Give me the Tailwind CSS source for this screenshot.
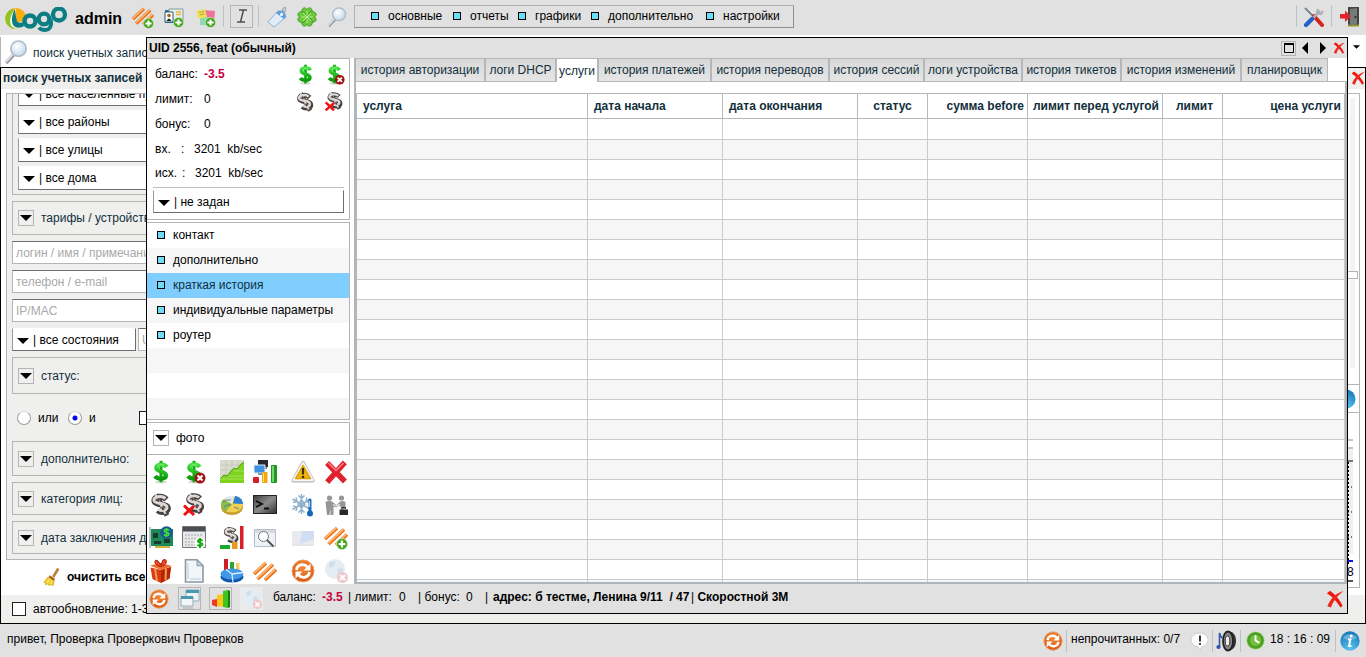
<!DOCTYPE html>
<html lang="ru">
<head>
<meta charset="utf-8">
<title>Logo admin</title>
<script src="https://cdn.jsdelivr.net/npm/@tailwindcss/browser@4"></script>
</head>
<body class="flex h-screen flex-col overflow-hidden bg-[#e1e1e1] font-['Liberation_Sans',Arial,sans-serif] text-[12px] leading-4 text-black">

<svg class="absolute size-0" aria-hidden="true">
  <defs>
    <linearGradient id="gGreen" x1="0" y1="0" x2="0" y2="1"><stop offset="0" stop-color="#3fe03a"/><stop offset="1" stop-color="#0c9a0c"/></linearGradient>
    <linearGradient id="gDark" x1="0" y1="0" x2="1" y2="1"><stop offset="0" stop-color="#3a3a3a"/><stop offset=".5" stop-color="#8b8b8b"/><stop offset="1" stop-color="#2c2c2c"/></linearGradient>
    <radialGradient id="gBlue" cx=".5" cy=".9" r=".9"><stop offset="0" stop-color="#5cc4f2"/><stop offset="1" stop-color="#1577b8"/></radialGradient>
    <radialGradient id="gOrange" cx=".5" cy=".3" r=".8"><stop offset="0" stop-color="#f58a3a"/><stop offset="1" stop-color="#d4520a"/></radialGradient>
    <radialGradient id="gLens" cx=".4" cy=".35" r=".7"><stop offset="0" stop-color="#fff"/><stop offset="1" stop-color="#bcd6ec"/></radialGradient>
  </defs>
  <symbol id="plus" viewBox="0 0 12 12"><circle cx="6" cy="6" r="5.5" fill="#42a51a" stroke="#dff2d2" stroke-width=".6"/><path d="M6 2.6v6.8M2.6 6h6.8" stroke="#fff" stroke-width="2.2"/></symbol>
  <symbol id="bad" viewBox="0 0 12 12"><circle cx="6" cy="6" r="5.5" fill="#9c1414"/><path d="M3.5 3.5l5 5M8.500 3.500l-5 5" stroke="#fff" stroke-width="2"/></symbol>
  <symbol id="dollar" viewBox="0 0 24 24"><ellipse cx="12" cy="22" rx="6" ry="1.500" fill="#000" opacity=".15"/><path d="M12 .8v21.500" stroke="#14a514" stroke-width="3"/><path d="M17.500 7C16 3.800 7.500 3.500 7.300 7.800c-.2 4.200 9.800 3 9.700 7.600-.1 4-8.600 4.200-11 .6" fill="none" stroke="url(#gGreen)" stroke-width="4.200"/><path d="M8 6.500c1.500-2 5-2.200 7-1.200" fill="none" stroke="#8ef08a" stroke-width="1"/></symbol>
  <symbol id="dollarbad" viewBox="0 0 24 24"><use href="#dollar" width="24" height="24"/><use href="#bad" x="12" y="12" width="12" height="12"/></symbol>
  <symbol id="sgrey" viewBox="0 0 24 24"><path d="M7 1.500l11 21" stroke="#4a4442" stroke-width="5"/><path d="M17.500 6.500C13 2 4 3.500 5.500 8.500c1.500 4.300 12 1.500 13.300 6 1.200 4.500-6 6.200-10.100 3" fill="none" stroke="#46413f" stroke-width="5.800"/><path d="M6.500 1.500l10 19.500" stroke="#cfc9c7" stroke-width="2.400"/><path d="M16.500 5.500C12.500 2 4.300 3.800 5 7.500c1 4.300 11.500 1.500 12.800 6 1 4.200-5.500 5.200-8.600 2.500" fill="none" stroke="#ded9d7" stroke-width="3"/><path d="M8.500 5.500l1.500 3M13 14l1.500 3" stroke="#4a4442" stroke-width="2"/></symbol>
  <symbol id="sgreyx" viewBox="0 0 24 24"><use href="#sgrey" x="2" y="-1" width="22" height="23"/><path d="M2 12.500l10 9.500M12 13L2 22" stroke="#f01010" stroke-width="3"/></symbol>
  <symbol id="chart" viewBox="0 0 24 24"><path d="M0 0h24v23H0z" fill="#d9dccf"/><path d="M0 5h24M0 10h24M0 15h24M6 0v23M12 0v23M18 0v23" stroke="#bfc5b4" stroke-width=".7"/><path d="M0 19l4-4 3 1 4-5 3-3 3 1 4-5 3-2v21H0z" fill="#7fd31f"/><path d="M0 19l4-4 3 1 4-5 3-3 3 1 4-5 3-2" fill="none" stroke="#4fa30c"/><path d="M0 19h24M8 16h16M14 11h10" stroke="#b6ec74" stroke-width=".7"/></symbol>
  <symbol id="traffic" viewBox="0 0 24 24"><path d="M5 0h10v7H5z" fill="#28292e"/><path d="M9 7h5v2H9z" fill="#70757c"/><path d="M1 5h11v8H1z" fill="#3c93e4" stroke="#e2ecf6"/><path d="M5 13h4v2H5z" fill="#8b929c"/><rect x="0" y="17" width="6" height="6" rx="1" fill="#d2212c"/><rect x="9" y="12" width="5.500" height="11" rx="1" fill="#f0a818"/><path d="M10.500 13v9" stroke="#ffe07a"/><rect x="18" y="5" width="6" height="18" rx="1" fill="#209627"/><path d="M20 6v16" stroke="#8cec7e" stroke-width="1.500"/></symbol>
  <symbol id="warn" viewBox="0 0 24 24"><path d="M12 3L21.500 20.500h-19z" fill="#b4b4b4" stroke="#b4b4b4" stroke-width="4" stroke-linejoin="round"/><path d="M12 3L21.500 20h-19z" fill="#fff" stroke="#f5f5f5" stroke-width="2.500" stroke-linejoin="round"/><path d="M12 5.500l7.500 13h-15z" fill="#f0b414" stroke="#e0a000" stroke-width="1.500" stroke-linejoin="round"/><path d="M12 8v6.500" stroke="#3c2c00" stroke-width="2.200"/><circle cx="12" cy="17" r="1.300" fill="#3c2c00"/></symbol>
  <symbol id="redx" viewBox="0 0 24 24"><path d="M5 5l14 14.500M19 4.500L5 20" stroke="#e0222e" stroke-width="5.500" stroke-linecap="square"/><path d="M4.500 3l7.500 7.500L19.500 3" fill="none" stroke="#ff8088" stroke-width="1.500"/></symbol>
  <symbol id="pie" viewBox="0 0 24 24"><ellipse cx="12" cy="14" rx="11" ry="8" fill="#c49a2a"/><ellipse cx="12" cy="11.500" rx="11" ry="8" fill="#f2cf50"/><path d="M12 11L3 6.500C-1 11 2 17 6 18.300z" fill="#8cbc4c"/><path d="M12 11L4 5.500C8 2.500 13 3 14 3.500z" fill="#dfe9ef"/><path d="M13 10.500l2-7.500c5 .5 8 4 8 8z" fill="#2f7fd0"/><path d="M3 9q3-3 8-2M4 14q3-3 7-2M14 14l5 2" stroke="#3a6ea0" fill="none" stroke-width=".8"/></symbol>
  <symbol id="term" viewBox="0 0 24 24"><path d="M0 2h24v19H0z" fill="url(#gDark)"/><path d="M.5 2.500h23v18H.5z" fill="none" stroke="#222"/><path d="M3 8l6 3-6 3M11 15.500h5" fill="none" stroke="#0a0a0a" stroke-width="1.800"/></symbol>
  <symbol id="snow" viewBox="0 0 24 24"><g stroke="#8fb0cb" stroke-width="1.500" fill="none"><path d="M10.500 1v20M1.500 6l18 10.500M19.500 6l-18 10.500M7.500 2.500l3 3 3-3M7.500 19.500l3-3 3 3M2 9.500l4-1-1-4M19 9.500l-4-1 1-4M2 13l4 1-1 4M7 11l3.500-4 3.500 4-3.500 4z"/></g><path d="M19 7v12" stroke="#1f6fc0" stroke-width="3" stroke-linecap="round"/><circle cx="19" cy="20.500" r="3" fill="#1767b8"/><path d="M18.600 8v6" stroke="#bfe0fa"/></symbol>
  <symbol id="shake" viewBox="0 0 24 24"><g fill="#969696"><circle cx="5.500" cy="5" r="2.600"/><circle cx="17.500" cy="5" r="2.600"/><path d="M1.500 9q4-3 7 0l4 3 3-3q3-2 6 0v7h-2v6h-2.500v-7l-1.500-3-3 2.500-3-1v8.500H6.500v-6l-1 6H3z"/></g><path d="M9 11.500l3.500 1.500 3-2" stroke="#e4e4e4" fill="none" stroke-width="1.300"/><path d="M15.500 16.500H24V22h-8.500z" fill="#2a2a2a"/><path d="M18 16v-1.500h3.500V16" stroke="#2a2a2a" fill="none"/></symbol>
  <symbol id="board" viewBox="0 0 24 24"><path d="M2 3h22v17H2z" fill="#1d8a5a"/><path d="M1 1v21" stroke="#a7adb0" stroke-width="1.500"/><path d="M4 7h5v5H4zM5 15h7v3H5zM15 13h6v4h-6z" fill="#173c2d"/><path d="M6 21h15" stroke="#d4b33c" stroke-width="2"/><circle cx="17.500" cy="6.500" r="6.300" fill="#1a5a94"/><path d="M20 4.500c-1-1.800-5-1.500-4.800.5.300 2 5 1 4.800 3.200-.2 1.800-4 2-5 .3M17.500 2v9" fill="none" stroke="#3fe03a" stroke-width="1.600"/></symbol>
  <symbol id="caldollar" viewBox="0 0 24 24"><path d="M.5.500h23v21H.5z" fill="#e8e8ea" stroke="#777"/><path d="M1 1h22v4.500H1z" fill="#4a4d52"/><path d="M3 9h18M3 12.500h12M3 16h10M3 19h10" stroke="#b9bcc0" stroke-width="1.500" stroke-dasharray="2 1"/><circle cx="18" cy="17" r="5.500" fill="#fff"/><path d="M20.500 15c-1-2-5-1.500-4.600.5.200 1.800 4.800 1 4.600 3-.2 1.600-4 1.800-5 .2M18 12v10" fill="none" stroke="#18a818" stroke-width="2"/></symbol>
  <symbol id="sbars" viewBox="0 0 24 24"><use href="#sgrey" x="2" y="0" width="18" height="19"/><rect x="0" y="19" width="10" height="4" fill="#18a830"/><rect x="12" y="16" width="5.500" height="7" fill="#e89a20"/><rect x="20" y="0" width="3.500" height="23" fill="#d81f2a"/></symbol>
  <symbol id="find" viewBox="0 0 24 24"><path d="M1.500 3.500h21v17h-21z" fill="#eef1f5" stroke="#b9bec6"/><path d="M2 4h20v3H2z" fill="#d5dbe3"/><circle cx="10.500" cy="10.500" r="5" fill="#fff" stroke="#777"/><path d="M14 14l6.500 6.500" stroke="#555" stroke-width="2"/></symbol>
  <symbol id="faded" viewBox="0 0 24 24"><path d="M1 5h22v14H1z" fill="#e8eaf0"/><path d="M11 5h12v8L9 18z" fill="#d0def3"/><path d="M1 18h22v2H1z" fill="#e4e6ea"/></symbol>
  <symbol id="stripes" viewBox="0 0 24 24"><path d="M1 15L13 4M4.500 20L20 5.500M12 21l11-10.500" stroke="#ec7014" stroke-width="3.600"/><path d="M1 14.200L12.500 3.700M4.500 19.200L19.500 5.200M12 20l10.500-10" stroke="#fdbb7c" stroke-width="1.600"/></symbol>
  <symbol id="stripesplus" viewBox="0 0 24 24"><use href="#stripes" y="-2" width="24" height="24"/><use href="#plus" x="12" y="12" width="12" height="12"/></symbol>
  <symbol id="gift" viewBox="0 0 24 24"><path d="M1.500 8.500L12 11l10-3-1.500 11.500L12 24l-8.500-4z" fill="#d83a14"/><path d="M12 11l10-3-1.500 11.500L12 24z" fill="#b42608"/><path d="M6 9.500L8 22M17 9.500L16.500 21" stroke="#f79c4c" stroke-width="2"/><path d="M1 6.500L12 4l11 3-11 4z" fill="#ee6c2c"/><path d="M12 7.500C4 6 5 0 8.500 1.500L12 6l2-5c4-2 6 4-2 6.500z" fill="#f04a28" stroke="#9c1c04"/></symbol>
  <symbol id="page" viewBox="0 0 24 24"><path d="M3.500.800h11.500l6 6V23H3.500z" fill="#f3f6f9" stroke="#8a98a8" stroke-width="1.600"/><path d="M15 .8v6h6z" fill="#c3ced9" stroke="#8a98a8"/><path d="M6 4v16M8 20h11" stroke="#d8e0e9" stroke-width="2"/></symbol>
  <symbol id="pie3d" viewBox="0 0 24 24"><path d="M4 0h4v12H4z" fill="#cc1f26"/><path d="M10 3h4v9h-4z" fill="#2fa238"/><path d="M16 4h3.500v8H16z" fill="#efcf62"/><ellipse cx="12" cy="18" rx="11.500" ry="5.500" fill="#0d55a8"/><ellipse cx="12" cy="15" rx="11.500" ry="5.500" fill="#3f97e6"/><path d="M12 15l-6-4.600M12 15l11-1.500M12 15l1 8.500" stroke="#d8edff" stroke-width="1.300"/></symbol>
  <symbol id="refresh" viewBox="0 0 24 24"><circle cx="12" cy="12" r="11" fill="url(#gOrange)" stroke="#e9a36c"/><path d="M5.500 11C6 5.500 13 4 16.500 8M18.500 13C18 18.500 11 20 7.500 16" fill="none" stroke="#fff" stroke-width="2.800"/><path d="M19.500 4.500v7h-7zM4.500 19.500v-7h7z" fill="#fff"/></symbol>
  <symbol id="globex" viewBox="0 0 24 24"><circle cx="11" cy="10" r="10" fill="#e4edf3"/><path d="M5 4q4-3 7-1l-3 5-4 1zM13 10l6-1v5l-5 4z" fill="#d3dfe8"/><circle cx="18.500" cy="18.500" r="5.500" fill="#efc8cb"/><path d="M16 16l5 5M21 16l-5 5" stroke="#fff" stroke-width="1.800"/></symbol>
  <symbol id="lens" viewBox="0 0 24 24"><path d="M10 14.500L2 23" stroke="#8f949b" stroke-width="3.400"/><path d="M9.500 14L1.500 22.500" stroke="#e6e9ed" stroke-width="1.500"/><circle cx="14.500" cy="8.700" r="7.700" fill="url(#gLens)" stroke="#b4bbc4" stroke-width="1.600"/></symbol>
  <symbol id="thinx" viewBox="0 0 20 20"><path d="M1 3.500c5 3 11 9 15 16l2.500-2C15 10 9 4 4.500.8z" fill="#ee180c"/><path d="M19.500 1C11 3 4.500 10 1.500 18l4 1.500C7.500 13 12 7 19.500 1z" fill="#f0281c"/></symbol>
  <symbol id="down" viewBox="0 0 12 6"><path d="M0 0h12L6 6z" fill="#000"/></symbol>
  <symbol id="broom" viewBox="0 0 20 22"><path d="M18 1l-6 10" stroke="#b8803c" stroke-width="3"/><path d="M8 9l6 4-1 3-7-4z" fill="#a8642c"/><path d="M6 11l7 5-1 5-3-1-2 1-1-2-3 1v-2l-2-1z" fill="#f4d02c" stroke="#c89c10" stroke-width=".8"/><path d="M8 13l-3 5M10.500 15l-1 4" stroke="#fff1a0"/></symbol>
</svg>

<!-- Toolbar -->
<header class="flex h-[35px] shrink-0 items-center pr-[6px] pb-[3px] pl-1">
  <svg class="mt-2 h-[26px] w-16 shrink-0" viewBox="0 0 64 26" role="img" aria-label="Logo">
    <circle cx="12" cy="11.500" r="10.500" fill="#faae0c"/><path d="M9 1.500A10.500 10.500 0 0 0 10 22z" fill="#8fc31f"/>
    <path d="M12 1.500c-5 4-7 12-5 17 3 4 10 4 14 0l-1-5c-3 2-6 2-8 0-1-4-1-8 0-12z" fill="#fff"/>
    <path d="M11 2c-3 5-4 11-2 16 3 4 9 3 11 1l-1-4c-2 1-5 1-6-1-1-4-2-8-2-12z" fill="#0c7d83"/>
    <circle cx="26" cy="14" r="5.500" fill="none" stroke="#0c7d83" stroke-width="4.500"/>
    <circle cx="40" cy="12" r="5.300" fill="none" stroke="#0c7d83" stroke-width="4.300"/>
    <path d="M46.500 12c2 7-1 11-5.500 11-3 0-5-1-6-2.500" fill="none" stroke="#0c7d83" stroke-width="3.800"/>
    <circle cx="55" cy="7.500" r="6" fill="none" stroke="#0c7d83" stroke-width="4.300"/>
  </svg>
  <h1 class="mt-[6px] ml-[7px] w-[50px] text-[16px] font-bold">admin</h1>
  <button aria-label="Новый тариф" class="ml-[7px]"><svg class="mt-[3px] size-[22px]"><use href="#stripesplus"/></svg></button>
  <button aria-label="Новая карта" class="ml-[10px]"><svg class="mt-[3px] size-5" viewBox="0 0 20 20"><path d="M1 2h14v13H1z" fill="#3a6f94"/><path d="M5 1h14v12H5z" fill="#e8efe8" stroke="#7f9d9f"/><path d="M1 4h8v10H1z" fill="#fff" stroke="#245a80"/><circle cx="5" cy="7.500" r="1.800" fill="#a8641c"/><path d="M2.500 13q2.500-5 5 0z" fill="#222"/><path d="M12 4h5M12 6.500h5" stroke="#efb33c" stroke-width="1.500"/><use href="#plus" x="9" y="9" width="11" height="11"/></svg></button>
  <button aria-label="Новая заметка" class="ml-3"><svg class="mt-[3px] size-5" viewBox="0 0 20 20"><path d="M7 2l12 1-1 11H7z" fill="#f2729c"/><path d="M4 9h10v8H4z" fill="#8fd8b0"/><path d="M0 3l9-2 2 8-9 2z" fill="#f0e060"/><path d="M3 4.500l5-1M3.500 7l5-1" stroke="#b8a830"/><use href="#plus" x="9" y="9" width="11" height="11"/></svg></button>
  <span class="ml-[7px] h-[22px] w-px bg-[#b9c2c4]"></span>
  <button aria-label="Курсор" class="ml-[6px] flex size-[23px] items-center justify-center border border-[#b5b5b5]"><svg class="size-4" viewBox="0 0 16 16"><path d="M5 2h8M9.500 2L6.500 14M3 14h8" stroke="#505050" stroke-width="1.500"/></svg></button>
  <span class="ml-[5px] h-[22px] w-px bg-[#b9c2c4]"></span>
  <button aria-label="Метка" class="ml-[7px]"><svg class="mt-[2px] size-[22px]" viewBox="0 0 22 22"><path d="M12 5l6 0 2 6L8 21l-6-5z" fill="#e3edf8" stroke="#8db2dc"/><path d="M12 5l6 0 2 6-2 2-8-6z" fill="#5f9ce0"/><path d="M15.500 8c0-4 3-8 4-6s-1 4-2 6" stroke="#a0a8b0" fill="none" stroke-width="1.300"/><circle cx="15.500" cy="8.500" r="1.500" fill="#fff"/></svg></button>
  <button aria-label="Клевер" class="ml-[9px]"><svg class="mt-[2px] size-5" viewBox="0 0 20 20"><g fill="#6cc83c" stroke="#3c9a1c"><path d="M10 10C4 9 4 5 5.500 2 7 0 9 1 10 2.500 11 1 13 0 14.500 2 16 5 16 9 10 10z"/><path d="M10 10C4 9 4 5 5.500 2 7 0 9 1 10 2.500 11 1 13 0 14.500 2 16 5 16 9 10 10z" transform="rotate(90 10 10)"/><path d="M10 10C4 9 4 5 5.500 2 7 0 9 1 10 2.500 11 1 13 0 14.500 2 16 5 16 9 10 10z" transform="rotate(180 10 10)"/><path d="M10 10C4 9 4 5 5.500 2 7 0 9 1 10 2.500 11 1 13 0 14.500 2 16 5 16 9 10 10z" transform="rotate(270 10 10)"/></g><path d="M10 4v12M4 10h12M6 6l8 8M14 6l-8 8" stroke="#b8ec8c" stroke-width="1"/></svg></button>
  <button aria-label="Поиск" class="ml-[10px]"><svg class="mt-[2px] size-5"><use href="#lens"/></svg></button>
  <nav class="ml-[7px] flex h-[23px] w-[440px] items-center border border-r-[#8e8e8e] border-b-[#8e8e8e] border-[#b2b2b2] pb-px pl-4">
    <a href="#" class="flex w-[82px] items-center gap-[9px]"><i class="size-2 shrink-0 border border-black bg-[#6fdcf5]"></i>основные</a>
    <a href="#" class="flex w-[65px] items-center gap-[9px]"><i class="size-2 shrink-0 border border-black bg-[#6fdcf5]"></i>отчеты</a>
    <a href="#" class="flex w-[73px] items-center gap-[9px]"><i class="size-2 shrink-0 border border-black bg-[#6fdcf5]"></i>графики</a>
    <a href="#" class="flex w-[115px] items-center gap-[9px]"><i class="size-2 shrink-0 border border-black bg-[#6fdcf5]"></i>дополнительно</a>
    <a href="#" class="flex items-center gap-[9px]"><i class="size-2 shrink-0 border border-black bg-[#6fdcf5]"></i>настройки</a>
  </nav>
  <span class="ml-auto h-[22px] w-px bg-[#b9c2c4]"></span>
  <button aria-label="Инструменты" class="ml-[7px]"><svg class="mt-[2px] size-5" viewBox="0 0 20 20"><path d="M1 1l9 9" stroke="#7a8088" stroke-width="1.800"/><path d="M10 9l8 9" stroke="#d42420" stroke-width="4" stroke-linecap="round"/><path d="M16 4L8 12" stroke="#a8aeb6" stroke-width="2.600"/><path d="M14 2l-1 4 4 1 2-3" fill="none" stroke="#a8aeb6" stroke-width="2"/><path d="M8 12l-6 6" stroke="#2060c8" stroke-width="4.200" stroke-linecap="round"/></svg></button>
  <span class="ml-[7px] h-[22px] w-px bg-[#b9c2c4]"></span>
  <button aria-label="Выход" class="ml-[8px]"><svg class="mt-[2px] size-5" viewBox="0 0 20 20"><path d="M8 0h11v19H8z" fill="#444"/><path d="M8 18.500h11" stroke="#9a9a20" stroke-width="2"/><path d="M10 2l7-1v16l-7 2z" fill="#777b78"/><circle cx="15.500" cy="10" r="1" fill="#222"/><path d="M0 7h5V3.500L11 9.500 5 15v-3.500H0z" fill="#e0242c"/></svg></button>
</header>

<!-- Desktop with overlapping windows -->
<main class="relative flex min-h-0 flex-1 flex-col border-t-2 border-white">
  <div class="flex h-[30px] shrink-0 items-start border-l border-[#b5b5b5] bg-white pl-[3px]">
    <svg class="mt-[3px] size-6"><use href="#lens"/></svg>
    <span class="mt-2 ml-[5px] text-[#12303c]">поиск учетных записей</span>
    <svg class="mt-2 mr-[6px] ml-auto h-1 w-[7px]"><use href="#down"/></svg>
  </div>

  <!-- Search window -->
  <section class="flex min-h-0 flex-1 flex-col border border-black bg-[#efefed]">
    <div class="flex h-[21px] shrink-0 items-center justify-between bg-[#efefed] pb-px pl-[2px] font-bold text-[#12303c]">
      <h2>поиск учетных записей</h2>
      <button aria-label="Закрыть поиск"><svg class="size-[14px]"><use href="#thinx"/></svg></button>
    </div>
    <div class="flex min-h-0 flex-1 justify-between bg-white pt-1">
      <form class="flex w-[330px] flex-col pl-[5px]">
        <div class="flex min-h-0 flex-1 flex-col justify-end gap-[6px] overflow-hidden border border-[#b5b5b5] bg-[#efefed] px-[5px] pb-[5px]">
          <div class="flex shrink-0 flex-col gap-1 border border-[#b5b5b5] px-[5px] pt-[5px] pb-1">
            <div class="relative"><select aria-label="Населённые пункты" class="h-6 w-full appearance-none border border-t-white border-r-[#6e6e6e] border-b-[#6e6e6e] border-l-[#9a9a9a] bg-white pl-5 outline-none"><option>| все населенные пункты</option></select><svg class="absolute top-[10px] left-[5px] h-[6px] w-[12px]"><use href="#down"/></svg></div>
            <div class="relative"><select aria-label="Районы" class="h-6 w-full appearance-none border border-t-white border-r-[#6e6e6e] border-b-[#6e6e6e] border-l-[#9a9a9a] bg-white pl-5 outline-none"><option>| все районы</option></select><svg class="absolute top-[10px] left-[5px] h-[6px] w-[12px]"><use href="#down"/></svg></div>
            <div class="relative"><select aria-label="Улицы" class="h-6 w-full appearance-none border border-t-white border-r-[#6e6e6e] border-b-[#6e6e6e] border-l-[#9a9a9a] bg-white pl-5 outline-none"><option>| все улицы</option></select><svg class="absolute top-[10px] left-[5px] h-[6px] w-[12px]"><use href="#down"/></svg></div>
            <div class="relative"><select aria-label="Дома" class="h-6 w-full appearance-none border border-t-white border-r-[#6e6e6e] border-b-[#6e6e6e] border-l-[#9a9a9a] bg-white pl-5 outline-none"><option>| все дома</option></select><svg class="absolute top-[10px] left-[5px] h-[6px] w-[12px]"><use href="#down"/></svg></div>
          </div>
          <button type="button" class="flex h-[34px] shrink-0 items-center gap-[7px] border border-[#b5b5b5] pl-[5px] text-[#12303c]"><span class="flex size-4 items-center justify-center border border-[#b5b5b5]"><svg class="h-[6px] w-[12px]"><use href="#down"/></svg></span>тарифы / устройства</button>
          <input aria-label="Логин, имя, примечание" placeholder="логин / имя / примечание" class="h-[23px] shrink-0 border border-t-[#6e6e6e] border-[#b5b5b5] bg-white px-[3px] outline-none placeholder:text-[#a9a9a9]">
          <input aria-label="Телефон, e-mail" placeholder="телефон / e-mail" class="h-[23px] shrink-0 border border-t-[#6e6e6e] border-[#b5b5b5] bg-white px-[3px] outline-none placeholder:text-[#a9a9a9]">
          <input aria-label="IP/MAC" placeholder="IP/MAC" class="h-[23px] shrink-0 border border-t-[#6e6e6e] border-[#b5b5b5] bg-white px-[3px] outline-none placeholder:text-[#a9a9a9]">
          <div class="flex shrink-0 gap-[2px]">
            <div class="relative w-[124px]"><select aria-label="Состояния" class="h-[23px] w-full appearance-none border border-t-white border-r-[#6e6e6e] border-b-[#6e6e6e] border-l-[#9a9a9a] bg-white pl-5 outline-none"><option>| все состояния</option></select><svg class="absolute top-[10px] left-[5px] h-[6px] w-[12px]"><use href="#down"/></svg></div>
            <input aria-label="UID" placeholder="UID" class="h-[23px] w-20 border border-t-[#6e6e6e] border-[#b5b5b5] bg-white px-[3px] outline-none placeholder:text-[#a9a9a9]">
          </div>
          <button type="button" class="flex h-[37px] shrink-0 items-center gap-[7px] border border-[#b5b5b5] pl-[5px] text-[#12303c]"><span class="flex size-4 items-center justify-center border border-[#b5b5b5]"><svg class="h-[6px] w-[12px]"><use href="#down"/></svg></span>статус:</button>
          <div class="flex h-[35px] shrink-0 items-center pl-[5px]">
            <label class="flex w-[51px] items-center gap-[7px]"><input type="radio" name="mode" class="size-[14px] appearance-none rounded-full border border-[#9a9a9a] border-t-[#d5d5d5] bg-white">или</label>
            <label class="flex w-[71px] items-center gap-[7px]"><input type="radio" name="mode" checked class="size-[14px] appearance-none rounded-full border border-[#9a9a9a] border-t-[#d5d5d5] bg-white bg-[radial-gradient(circle,#0000ee_2px,transparent_3px)]">и</label>
            <input type="checkbox" aria-label="Только активные" class="size-[14px] appearance-none border border-[#222] bg-white">
          </div>
          <button type="button" class="flex h-[35px] shrink-0 items-center gap-[7px] border border-[#b5b5b5] pl-[5px] text-[#12303c]"><span class="flex size-4 items-center justify-center border border-[#b5b5b5]"><svg class="h-[6px] w-[12px]"><use href="#down"/></svg></span>дополнительно:</button>
          <button type="button" class="flex h-[33px] shrink-0 items-center gap-[7px] border border-[#b5b5b5] pl-[5px] text-[#12303c]"><span class="flex size-4 items-center justify-center border border-[#b5b5b5]"><svg class="h-[6px] w-[12px]"><use href="#down"/></svg></span>категория лиц:</button>
          <button type="button" class="flex h-[33px] shrink-0 items-center gap-[7px] border border-[#b5b5b5] pl-[5px] text-[#12303c]"><span class="flex size-4 items-center justify-center border border-[#b5b5b5]"><svg class="h-[6px] w-[12px]"><use href="#down"/></svg></span>дата заключения договора:</button>
        </div>
        <button type="button" class="flex h-[35px] shrink-0 items-center gap-[7px] pb-[2px] pl-[37px] font-bold"><svg class="h-[22px] w-[17px]"><use href="#broom"/></svg>очистить все</button>
      </form>
      <div class="flex w-24 flex-col pr-[5px] pb-[7px]">
        <div class="flex flex-1 flex-col border border-[#b5b5b5]">
          <div class="relative flex flex-1 flex-col items-end pt-1 pr-px">
            <div class="mr-[3px] w-[5px] flex-1 bg-[#f3f3f3]"></div>
            <span class="absolute top-[177px] right-px h-2 w-5 border border-[#b5b5b5] bg-white"></span>
          </div>
          <div class="mt-4 flex h-[29px] items-center justify-end border-y border-[#b5b5b5] pr-[3px]"><svg class="size-5" viewBox="0 0 20 20"><circle cx="10" cy="10" r="9.500" fill="url(#gBlue)"/></svg></div>
          <svg class="h-[174px] w-5 self-end" viewBox="0 0 20 174"><path d="M0 27h14M0 35h14" stroke="#c4c4c4" stroke-width="2"/><path d="M0 36h14v105H0z" fill="#efefef"/><path d="M0 48h14" stroke="#000"/><path d="M9.500 49v102" stroke="#000" stroke-dasharray="2 2"/><path d="M9 74h5M9 99h5M9 124h5" stroke="#000" stroke-dasharray="1 2"/><path d="M0 148h14" stroke="#1010e0" stroke-width="2"/><path d="M0 168h14" stroke="#555" stroke-width="2"/><text x="8" y="163" font-size="12">8</text></svg>
        </div>
      </div>
    </div>
    <div class="flex h-7 shrink-0 items-center pl-[11px]">
      <label class="flex items-center gap-[7px]"><input type="checkbox" class="size-[14px] appearance-none border border-[#222] bg-white">автообновление: 1-30</label>
    </div>
  </section>

  <!-- Account window -->
  <section class="absolute top-0 right-[18px] bottom-[10px] left-[146px] flex flex-col border border-black bg-[#e1e1e1]">
    <div class="flex h-5 shrink-0 items-center justify-between pr-[2px] pl-[2px]">
      <h2 class="font-bold">UID 2556, feat (обычный)</h2>
      <div class="flex items-center">
        <button aria-label="Развернуть" class="flex size-[15px] items-center justify-center border border-[#b5b5b5]"><svg class="h-[10px] w-[10px]" viewBox="0 0 10 10"><path d="M.5.500h9v9h-9z" fill="none" stroke="#000"/><path d="M0 1h10" stroke="#000" stroke-width="2"/></svg></button>
        <button aria-label="Назад" class="ml-[6px]"><svg class="h-3 w-[6px]" viewBox="0 0 6 12"><path d="M6 0v12L0 6z"/></svg></button>
        <button aria-label="Вперед" class="ml-3"><svg class="h-3 w-[6px]" viewBox="0 0 6 12"><path d="M0 0v12l6-6z"/></svg></button>
        <button aria-label="Закрыть окно" class="ml-[7px]"><svg class="size-3"><use href="#thinx"/></svg></button>
      </div>
    </div>

    <div class="flex min-h-0 flex-1">
      <aside class="flex w-[207px] shrink-0 flex-col overflow-hidden bg-white pr-1">
        <div class="flex h-[162px] shrink-0 flex-col border-y border-r border-[#b5b5b5] pr-[5px] pl-[6px]">
          <div class="flex justify-between pt-[2px] pl-[2px]">
            <dl class="grid auto-rows-[25px] grid-cols-[49px_auto] items-center">
              <dt>баланс:</dt><dd class="font-bold text-[#c8003c]">-3.5</dd>
              <dt>лимит:</dt><dd>0</dd>
              <dt>бонус:</dt><dd>0</dd>
            </dl>
            <div class="grid h-[54px] grid-cols-[29px_20px] grid-rows-2 items-center">
              <button aria-label="Пополнить"><svg class="size-[21px]"><use href="#dollar"/></svg></button>
              <button aria-label="Отменить платеж"><svg class="size-[21px]"><use href="#dollarbad"/></svg></button>
              <button aria-label="Кредит"><svg class="size-5"><use href="#sgrey"/></svg></button>
              <button aria-label="Отменить кредит"><svg class="size-5"><use href="#sgreyx"/></svg></button>
            </div>
          </div>
          <p class="flex h-[25px] items-center pl-[2px] whitespace-pre"><span class="w-[26px]">вх.</span><span class="w-[13px]">:</span>3201  kb/sec</p>
          <p class="flex h-6 items-center pl-[2px] whitespace-pre"><span class="w-[27px]">исх.</span><span class="w-[13px]">:</span>3201  kb/sec</p>
          <div class="relative mt-[2px] border-t border-[#b9c2c4] pt-[2px]"><select aria-label="Группа" class="h-[23px] w-full appearance-none border border-t-white border-r-[#6e6e6e] border-b-[#6e6e6e] border-l-[#9a9a9a] bg-white pl-5 outline-none"><option>| не задан</option></select><svg class="absolute top-3 left-[5px] h-[6px] w-[12px]"><use href="#down"/></svg></div>
        </div>
        <ul class="mt-[2px] flex h-[198px] shrink-0 flex-col overflow-hidden border-y border-r border-[#b5b5b5]">
          <li class="h-[25px] shrink-0"><a href="#" class="flex h-full items-center gap-2 pb-px pl-[10px]"><i class="size-2 border border-black bg-[#6fdcf5]"></i>контакт</a></li>
          <li class="h-[25px] shrink-0 bg-[#f6f6f6]"><a href="#" class="flex h-full items-center gap-2 pb-px pl-[10px]"><i class="size-2 border border-black bg-[#6fdcf5]"></i>дополнительно</a></li>
          <li class="h-[25px] shrink-0 bg-[#7fceff]"><a href="#" class="flex h-full items-center gap-2 pb-px pl-[10px] text-[#12303c]"><i class="size-2 border border-black bg-[#6fdcf5]"></i>краткая история</a></li>
          <li class="h-[25px] shrink-0 bg-[#f6f6f6]"><a href="#" class="flex h-full items-center gap-2 pb-px pl-[10px]"><i class="size-2 border border-black bg-[#6fdcf5]"></i>индивидуальные параметры</a></li>
          <li class="h-[25px] shrink-0"><a href="#" class="flex h-full items-center gap-2 pb-px pl-[10px]"><i class="size-2 border border-black bg-[#6fdcf5]"></i>роутер</a></li>
          <li class="h-[25px] shrink-0 bg-[#f6f6f6]"></li>
          <li class="h-[25px] shrink-0"></li>
          <li class="h-[25px] shrink-0 bg-[#f6f6f6]"></li>
        </ul>
        <button class="mt-[2px] flex h-[33px] shrink-0 items-center gap-[7px] border-y border-r border-[#b5b5b5] pb-px pl-[6px]"><span class="flex size-4 items-center justify-center border border-[#b5b5b5]"><svg class="h-[6px] w-[12px]"><use href="#down"/></svg></span>фото</button>
        <div class="grid min-h-0 flex-1 auto-rows-[33px] grid-cols-[33px_38px_33px_38px_33px_24px] items-center pl-[2px]">
          <button aria-label="Платеж"><svg class="size-6"><use href="#dollar"/></svg></button>
          <button aria-label="Отмена платежа"><svg class="size-6"><use href="#dollarbad"/></svg></button>
          <button aria-label="График"><svg class="size-6"><use href="#chart"/></svg></button>
          <button aria-label="Трафик"><svg class="size-6"><use href="#traffic"/></svg></button>
          <button aria-label="Предупреждение"><svg class="size-6"><use href="#warn"/></svg></button>
          <button aria-label="Удалить"><svg class="size-6"><use href="#redx"/></svg></button>
          <button aria-label="Кредит"><svg class="size-6"><use href="#sgrey"/></svg></button>
          <button aria-label="Отмена кредита"><svg class="size-6"><use href="#sgreyx"/></svg></button>
          <button aria-label="Статистика"><svg class="size-6"><use href="#pie"/></svg></button>
          <button aria-label="Терминал"><svg class="size-6"><use href="#term"/></svg></button>
          <button aria-label="Заморозка"><svg class="size-6"><use href="#snow"/></svg></button>
          <button aria-label="Договор"><svg class="size-6"><use href="#shake"/></svg></button>
          <button aria-label="Устройство"><svg class="size-6"><use href="#board"/></svg></button>
          <button aria-label="Календарь платежей"><svg class="size-6"><use href="#caldollar"/></svg></button>
          <button aria-label="Списания"><svg class="size-6"><use href="#sbars"/></svg></button>
          <button aria-label="Просмотр"><svg class="size-6"><use href="#find"/></svg></button>
          <button aria-label="Карта"><svg class="size-6"><use href="#faded"/></svg></button>
          <button aria-label="Добавить услугу"><svg class="size-6"><use href="#stripesplus"/></svg></button>
          <button aria-label="Подарок"><svg class="size-6"><use href="#gift"/></svg></button>
          <button aria-label="Документ"><svg class="size-6"><use href="#page"/></svg></button>
          <button aria-label="Отчет"><svg class="size-6"><use href="#pie3d"/></svg></button>
          <button aria-label="Услуги"><svg class="size-6"><use href="#stripes"/></svg></button>
          <button aria-label="Обновить"><svg class="size-6"><use href="#refresh"/></svg></button>
          <button aria-label="Отключить"><svg class="size-6"><use href="#globex"/></svg></button>
        </div>
      </aside>

      <div class="flex min-w-0 flex-1 flex-col bg-white">
        <div role="tablist" class="flex h-[24px] shrink-0 border-l-2 border-[#b0b6ba] text-[#12303c]">
          <button role="tab" class="w-[130px] border-t border-r-2 border-b border-[#b5b8ba] bg-linear-to-b from-[#d8d8d8] to-[#e6e6e6] text-center whitespace-nowrap">история авторизации</button>
          <button role="tab" class="w-[71px] border-t border-r-2 border-b border-[#b5b8ba] bg-linear-to-b from-[#d8d8d8] to-[#e6e6e6] text-center whitespace-nowrap">логи DHCP</button>
          <button role="tab" aria-selected="true" class="w-[42px] border-t border-r-2 border-[#b5b8ba] bg-white pt-px text-center whitespace-nowrap">услуги</button>
          <button role="tab" class="w-[113px] border-t border-r-2 border-b border-[#b5b8ba] bg-linear-to-b from-[#d8d8d8] to-[#e6e6e6] text-center whitespace-nowrap">история платежей</button>
          <button role="tab" class="w-[118px] border-t border-r-2 border-b border-[#b5b8ba] bg-linear-to-b from-[#d8d8d8] to-[#e6e6e6] text-center whitespace-nowrap">история переводов</button>
          <button role="tab" class="w-[95px] border-t border-r-2 border-b border-[#b5b8ba] bg-linear-to-b from-[#d8d8d8] to-[#e6e6e6] text-center whitespace-nowrap">история сессий</button>
          <button role="tab" class="w-[98px] border-t border-r-2 border-b border-[#b5b8ba] bg-linear-to-b from-[#d8d8d8] to-[#e6e6e6] text-center whitespace-nowrap">логи устройства</button>
          <button role="tab" class="w-[99px] border-t border-r-2 border-b border-[#b5b8ba] bg-linear-to-b from-[#d8d8d8] to-[#e6e6e6] text-center whitespace-nowrap">история тикетов</button>
          <button role="tab" class="w-[120px] border-t border-r-2 border-b border-[#b5b8ba] bg-linear-to-b from-[#d8d8d8] to-[#e6e6e6] text-center whitespace-nowrap">история изменений</button>
          <button role="tab" class="w-[86px] border-t border-r border-b border-[#b5b8ba] bg-linear-to-b from-[#d8d8d8] to-[#e6e6e6] text-center whitespace-nowrap">планировщик</button>
          <span class="flex-1 border-b border-[#b5b8ba]"></span>
        </div>
        <div class="min-h-0 flex-1 overflow-hidden border-r-2 border-b-2 border-l-2 border-[#b0b6ba] pt-[11px]">
          <table class="w-full table-fixed border-separate border-spacing-0 border-t border-l border-[#b5b8ba]">
            <colgroup><col class="w-[231px]"><col class="w-[135px]"><col class="w-[135px]"><col class="w-[70px]"><col class="w-[100px]"><col class="w-[135px]"><col class="w-[60px]"><col></colgroup>
            <thead class="text-[#12303c] [&_th]:h-[25px] [&_th]:border-r [&_th]:border-b [&_th]:border-[#b5b8ba] [&_th]:whitespace-nowrap">
              <tr><th class="px-[6px] text-left">услуга</th><th class="px-[6px] text-left">дата начала</th><th class="px-[6px] text-left">дата окончания</th><th class="px-[3px]">статус</th><th class="px-[3px] text-right">сумма before</th><th class="px-[3px] text-right">лимит перед услугой</th><th class="pr-[2px] pl-[6px]">лимит</th><th class="px-[3px] text-right">цена услуги</th></tr>
            </thead>
            <tbody id="rows" class="[&_td]:border-r [&_td]:border-b [&_td]:border-[#c9cacb] [&_tr]:h-5 [&_tr:first-child]:h-[21px] [&_tr:nth-child(even)]:bg-[#f6f6f6]"></tbody>
          </table>
        </div>
      </div>
    </div>

    <footer class="flex h-[29px] shrink-0 items-center pr-[3px] pl-[2px]">
      <button aria-label="Обновить"><svg class="size-5"><use href="#refresh"/></svg></button>
      <button aria-label="Окна" class="ml-[9px] flex size-[23px] items-center justify-center border border-[#b5b5b5]"><svg class="size-5" viewBox="0 0 20 20"><path d="M6 1h13v11H6z" fill="#eef3f6" stroke="#8db0bc"/><path d="M6 1h13v3H6z" fill="#4799b0"/><path d="M1 8h12v9H1z" fill="#f4f7f8" stroke="#8db0bc"/><path d="M1 7h12v3H1z" fill="#4799b0"/><path d="M3 19h10" stroke="#aaa"/></svg></button>
      <button aria-label="Диаграмма" class="ml-2 flex size-[23px] items-center justify-center border border-[#b5b5b5]"><svg class="size-5" viewBox="0 0 20 20"><path d="M1 11l5-1v8l-5-2z" fill="#ee3a20"/><path d="M6 6l7-1v13l-7-1z" fill="#fcc818"/><path d="M12 2l5-1v18l-5-1z" fill="#3fc424"/><path d="M17 1l2 1v16l-2 1z" fill="#197a10"/></svg></button>
      <button aria-label="Сеть" class="ml-2 flex size-[23px] items-center justify-center bg-[#ebebeb]"><svg class="size-5"><use href="#globex"/></svg></button>
      <p class="ml-[10px] flex pb-[3px] whitespace-pre"><span class="w-[49px]">баланс:</span><b class="w-[26px] text-[#c8003c]">-3.5</b><span class="w-[51px]">| лимит:</span><span class="w-[19px]">0</span><span class="w-[48px]">| бонус:</span><span class="w-[19px]">0</span><span class="w-2">|</span><b class="w-[198px]">адрес: б тестме, Ленина 9/11  / 47</b><span>| </span><b>Скоростной 3М</b></p>
      <button aria-label="Закрыть" class="ml-auto"><svg class="size-[18px]"><use href="#thinx"/></svg></button>
    </footer>
  </section>
</main>

<!-- Status bar -->
<footer class="flex h-[33px] shrink-0 items-center pr-[6px] pl-[7px]">
  <p class="pb-1">привет, Проверка Проверкович Проверков</p>
  <button aria-label="Обновить" class="ml-auto"><svg class="size-5"><use href="#refresh"/></svg></button>
  <span class="mr-1 ml-[3px] h-[22px] w-px bg-[#b9c2c4]"></span>
  <p class="w-[120px] pb-1 whitespace-nowrap">непрочитанных: 0/7</p>
  <button aria-label="Сообщения" class="mr-[3px]"><svg class="size-[18px]" viewBox="0 0 18 18"><path d="M9 1a8 7 0 0 1 2 13.800L8.500 18 7 14.900A8 7 0 0 1 9 1z" fill="#fdfdfd" stroke="#ccc"/><path d="M9 3.500v6" stroke="#222" stroke-width="1.800"/><circle cx="9" cy="12" r="1.100" fill="#222"/></svg></button>
  <span class="h-[22px] w-px bg-[#b9c2c4]"></span>
  <button aria-label="Звук" class="mx-[3px]"><svg class="h-[22px] w-[21px]" viewBox="0 0 21 22"><path d="M12 2h4c6 4 5 16-1 18h-4z" fill="#333"/><ellipse cx="12" cy="11" rx="5" ry="9.500" fill="#888" stroke="#222" stroke-width="1.800"/><ellipse cx="11.500" cy="11" rx="2.300" ry="5" fill="#eee" stroke="#333"/><path d="M3.500 16V3q1 4 3 5" stroke="#2f58a8" fill="none" stroke-width="1.600"/><ellipse cx="2.500" cy="17" rx="2.200" ry="2" fill="#2f58a8"/></svg></button>
  <span class="h-[22px] w-px bg-[#b9c2c4]"></span>
  <svg class="mx-[5px] size-[19px]" viewBox="0 0 20 20"><circle cx="10" cy="10" r="9.500" fill="#55a82a" stroke="#cfe6c0"/><circle cx="10" cy="10" r="6.800" fill="#6fc03c" stroke="#3d8a18"/><path d="M10 4.500V10l4 2.500" fill="none" stroke="#fff" stroke-width="2"/></svg>
  <time class="w-[65px] pb-1 whitespace-nowrap">18 : 16 : 09</time>
  <span class="h-[22px] w-px bg-[#b9c2c4]"></span>
  <button aria-label="Справка" class="ml-1"><svg class="size-5" viewBox="0 0 20 20"><circle cx="10" cy="10" r="9.700" fill="url(#gBlue)"/><path d="M3 7a7.500 6 0 0 1 14 0q-7 4-14 0z" fill="#fff" opacity=".3"/><circle cx="11.200" cy="5" r="1.500" fill="#fff"/><path d="M8 8.500h2.500L9 15h2.500" fill="none" stroke="#fff" stroke-width="1.900"/></svg></button>
</footer>

<script>
  const body = document.getElementById('rows');
  for (let r = 0; r < 24; r++) {
    const row = body.insertRow();
    for (let c = 0; c < 8; c++) row.insertCell();
  }
</script>
</body>
</html>
